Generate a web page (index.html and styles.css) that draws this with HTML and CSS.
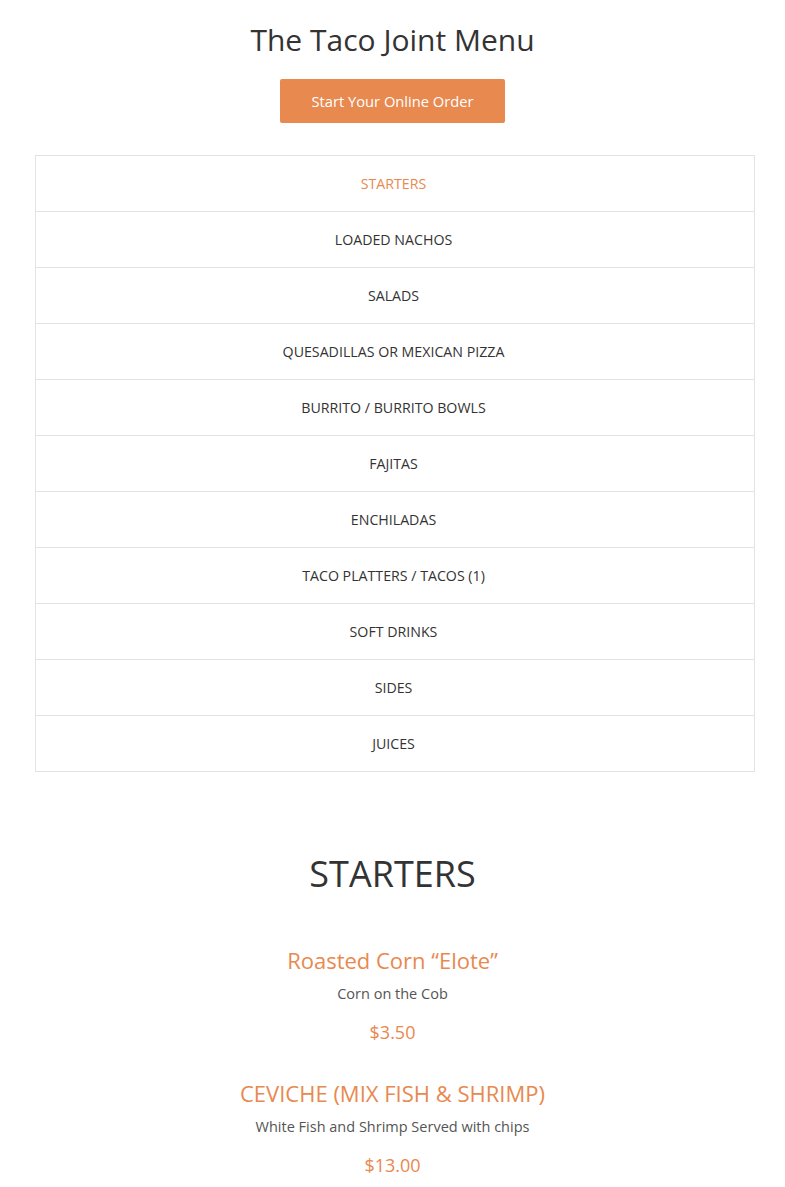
FILE: index.html
```html
<!DOCTYPE html>
<html>
<head>
<meta charset="utf-8">
<link rel="stylesheet" href="styles.css">
</head>
<body>
<div class="page">
  <h1 class="title">The Taco Joint Menu</h1>
  <div class="cta-wrap"><a class="cta" href="#">Start Your Online Order</a></div>
  <ul class="nav">
    <li class="nav-item active">STARTERS</li>
    <li class="nav-item">LOADED NACHOS</li>
    <li class="nav-item">SALADS</li>
    <li class="nav-item">QUESADILLAS OR MEXICAN PIZZA</li>
    <li class="nav-item">BURRITO / BURRITO BOWLS</li>
    <li class="nav-item">FAJITAS</li>
    <li class="nav-item">ENCHILADAS</li>
    <li class="nav-item">TACO PLATTERS / TACOS (1)</li>
    <li class="nav-item">SOFT DRINKS</li>
    <li class="nav-item">SIDES</li>
    <li class="nav-item">JUICES</li>
  </ul>
  <section class="section">
    <h2 class="section-title">STARTERS</h2>
    <div class="item">
      <h3 class="item-name">Roasted Corn “Elote”</h3>
      <p class="item-desc">Corn on the Cob</p>
      <p class="item-price">$3.50</p>
    </div>
    <div class="item">
      <h3 class="item-name">CEVICHE (MIX FISH &amp; SHRIMP)</h3>
      <p class="item-desc">White Fish and Shrimp Served with chips</p>
      <p class="item-price">$13.00</p>
    </div>
  </section>
</div>
</body>
</html>
```

FILE: styles.css
```css
html, body {
  margin: 0;
  padding: 0;
  background: #fff;
}
body {
  font-family: "Open Sans", "Noto Sans", sans-serif;
  color: #333;
}
.page {
  padding: 21px 35px 0 35px;
}
.title {
  margin: 0;
  font-size: 30px;
  line-height: 38px;
  font-weight: 400;
  text-align: center;
  color: #333;
}
.cta-wrap {
  display: flex;
  justify-content: center;
  margin-top: 20px;
}
.cta {
  display: block;
  width: 225px;
  height: 44px;
  line-height: 44px;
  text-align: center;
  background: #e8894f;
  color: #fff;
  font-size: 14.7px;
  text-decoration: none;
  border-radius: 2px;
}
.nav {
  list-style: none;
  margin: 32px -5px 0 0;
  padding: 0;
  border: 1px solid #e3e3e3;
  border-bottom: none;
}
.nav-item {
  height: 55px;
  line-height: 55px;
  padding-right: 3px;
  border-bottom: 1px solid #e3e3e3;
  text-align: center;
  font-size: 14.2px;
  color: #333;
}
.nav-item.active {
  color: #e8894f;
}
.section {
  margin-top: 78px;
  text-align: center;
}
.section-title {
  margin: 0;
  font-size: 36px;
  line-height: 48px;
  font-weight: 400;
  color: #333;
}
.item {
  display: flex;
  flex-direction: column;
  align-items: center;
}
.item:first-of-type {
  margin-top: 47px;
}
.item + .item {
  margin-top: 34px;
}
.item-name {
  margin: 0;
  font-size: 22px;
  line-height: 30px;
  font-weight: 400;
  color: #e8894f;
}
.item-desc {
  margin: 9px 0 0 0;
  font-size: 14.5px;
  line-height: 20px;
  color: #555;
}
.item-price {
  margin: 16px 0 0 0;
  font-size: 18px;
  line-height: 24px;
  color: #e8894f;
}
```
